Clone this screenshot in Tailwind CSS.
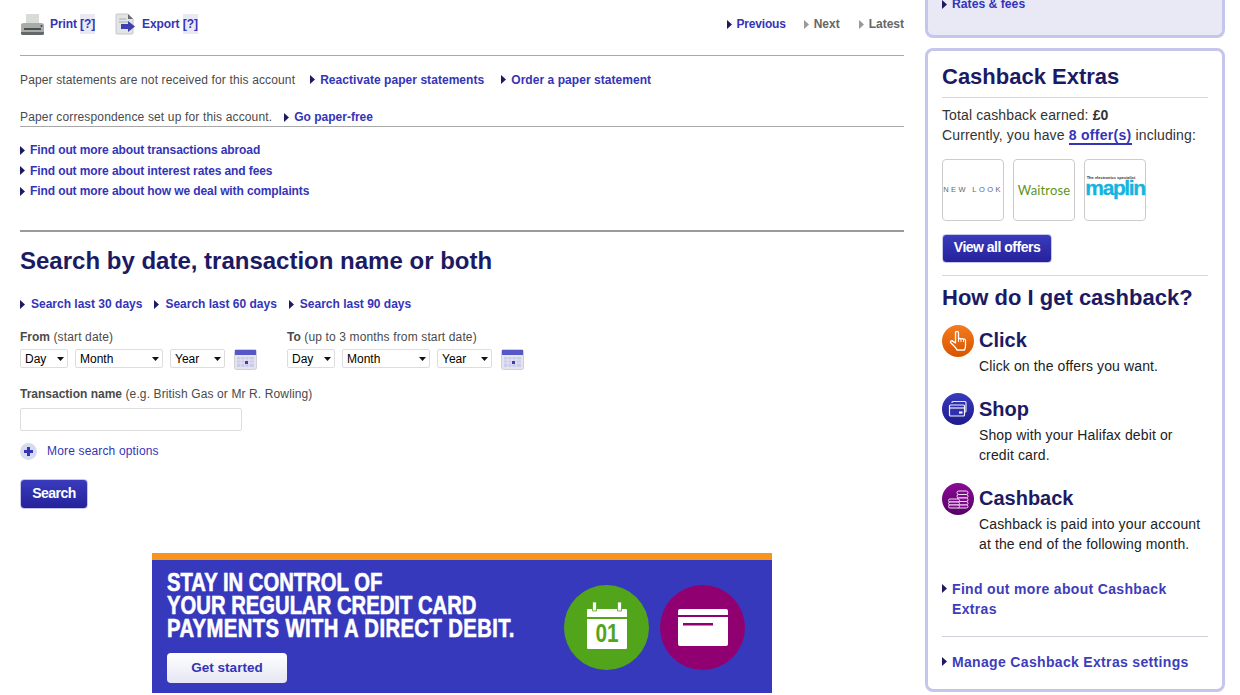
<!DOCTYPE html>
<html lang="en">

<head>
  <meta charset="UTF-8">
  <meta name="viewport" content="width=device-width, initial-scale=1.0">
  <title>Statement search</title>
  <script src="https://cdn.jsdelivr.net/npm/@tailwindcss/browser@4"></script>
</head>

<body class="h-[695px] overflow-hidden bg-white font-['Liberation_Sans',Arial,sans-serif] text-xs text-[#4a4a4a]">
  <div class="flex pl-[20px]">

    <!-- main column -->
    <main class="w-[884px] shrink-0">
      <div class="mb-[7px] flex h-[48px] items-center justify-between font-bold text-[#3434b8]">
        <div class="flex items-center tracking-[-0.1px]">
          <svg class="mr-[5px] h-[23px] w-[25px]" viewBox="0 0 25 23">
            <path d="M6 1h13v10H6z" fill="#d9dbd9" />
            <path d="M1 12q0-2 3-2h17q3 0 3 2v8H1z" fill="#a9adaa" />
            <path d="M1 19h23v2q0 1-2 1H3q-2 0-2-1z" fill="#63686a" />
            <path d="M4 15h17v2H4z" fill="#4b4f50" />
            <circle cx="21.500" cy="13" r="1" fill="#3434b8" />
          </svg>
          <span>Print <span class="bg-[#e9e9f6] py-[3px]">[?]</span></span>
          <svg class="ml-[20px] mr-[6px] h-[22px] w-[21px]" viewBox="0 0 21 22">
            <path d="M1 2q0-1 1-1h11l5 5v14q0 1-1 1H2q-1 0-1-1z" fill="#e3e4e6" stroke="#c4c6ca" />
            <path d="M13 1v5h5z" fill="#6b6d75" />
            <path d="M4 6h7M4 9h10" stroke="#a8aab0" />
            <path d="M6 11h7V8l7 5.500-7 5.500v-3H6z" fill="#3d3fb0" />
          </svg>
          <span>Export <span class="bg-[#e9e9f6] py-[3px]">[?]</span></span>
        </div>
        <div class="flex items-center">
          <svg class="mr-[5px] h-[9px] w-[5px]" viewBox="0 0 5 9"><path d="M0 0l5 4.500L0 9z" fill="#1b1a63" /></svg>
          <span class="tracking-[-0.2px]">Previous</span>
          <svg class="ml-[18px] mr-[5px] h-[9px] w-[5px]" viewBox="0 0 5 9"><path d="M0 0l5 4.500L0 9z" fill="#999999" /></svg>
          <span class="text-[#666666]">Next</span>
          <svg class="ml-[19px] mr-[5px] h-[9px] w-[5px]" viewBox="0 0 5 9"><path d="M0 0l5 4.500L0 9z" fill="#999999" /></svg>
          <span class="text-[#666666]">Latest</span>
        </div>
      </div>

      <div class="flex h-[48px] items-center border-t border-[#a8a8a8]">
        <span class="tracking-[0.14px]">Paper statements are not received for this account</span>
        <svg class="ml-[15px] mr-[5px] h-[9px] w-[5px]" viewBox="0 0 5 9"><path d="M0 0l5 4.500L0 9z" fill="#1b1a63" /></svg>
        <a class="font-bold tracking-[0.05px] text-[#3434b8]">Reactivate paper statements</a>
        <svg class="ml-[17px] mr-[5px] h-[9px] w-[5px]" viewBox="0 0 5 9"><path d="M0 0l5 4.500L0 9z" fill="#1b1a63" /></svg>
        <a class="font-bold tracking-[0.05px] text-[#3434b8]">Order a paper statement</a>
      </div>

      <div class="mt-[5px] flex h-[19px] items-center border-b border-[#a8a8a8]">
        <span class="tracking-[0.15px]">Paper correspondence set up for this account.</span>
        <svg class="ml-[12px] mr-[5px] h-[9px] w-[5px]" viewBox="0 0 5 9"><path d="M0 0l5 4.500L0 9z" fill="#1b1a63" /></svg>
        <a class="font-bold text-[#3434b8]">Go paper-free</a>
      </div>

      <ul class="mt-[13px] font-bold tracking-[-0.1px] text-[#3434b8]">
        <li class="flex h-[20px] items-center"><svg class="mr-[5px] h-[9px] w-[5px]" viewBox="0 0 5 9"><path d="M0 0l5 4.500L0 9z" fill="#1b1a63" /></svg>Find out more about transactions abroad</li>
        <li class="flex h-[21px] items-center"><svg class="mr-[5px] h-[9px] w-[5px]" viewBox="0 0 5 9"><path d="M0 0l5 4.500L0 9z" fill="#1b1a63" /></svg>Find out more about interest rates and fees</li>
        <li class="flex h-[20px] items-center"><svg class="mr-[5px] h-[9px] w-[5px]" viewBox="0 0 5 9"><path d="M0 0l5 4.500L0 9z" fill="#1b1a63" /></svg>Find out more about how we deal with complaints</li>
      </ul>

      <div class="mt-[29px] border-t-2 border-[#9a9a9a] pt-[14px]">
        <h2 class="text-2xl leading-[30px] font-bold text-[#1b1a63]">Search by date, transaction name or both</h2>
      </div>

      <div class="mt-[18px] flex h-[20px] items-center font-bold text-[#3434b8]">
        <svg class="mr-[6px] h-[9px] w-[5px]" viewBox="0 0 5 9"><path d="M0 0l5 4.500L0 9z" fill="#1b1a63" /></svg>
        <span>Search last 30 days</span>
        <svg class="ml-[12px] mr-[6px] h-[9px] w-[5px]" viewBox="0 0 5 9"><path d="M0 0l5 4.500L0 9z" fill="#1b1a63" /></svg>
        <span>Search last 60 days</span>
        <svg class="ml-[12px] mr-[6px] h-[9px] w-[5px]" viewBox="0 0 5 9"><path d="M0 0l5 4.500L0 9z" fill="#1b1a63" /></svg>
        <span>Search last 90 days</span>
      </div>

      <div class="mt-[15px] flex">
        <div class="w-[267px]">
          <div class="h-[17px] leading-[17px] tracking-[0.14px]"><b class="tracking-normal">From</b> (start date)</div>
          <div class="mt-[3px] flex items-start">
            <div class="relative w-[48px]">
              <select class="h-[19px] w-full appearance-none rounded-[2px] border border-[#dddddd] bg-white pl-[4px] text-xs text-black"><option>Day</option></select>
              <svg class="absolute right-[4px] top-[8px] h-[4px] w-[7px]" viewBox="0 0 7 4"><path d="M0 0h7L3.500 4z" fill="#111111" /></svg>
            </div>
            <div class="relative ml-[7px] w-[88px]">
              <select class="h-[19px] w-full appearance-none rounded-[2px] border border-[#dddddd] bg-white pl-[4px] text-xs text-black"><option>Month</option></select>
              <svg class="absolute right-[4px] top-[8px] h-[4px] w-[7px]" viewBox="0 0 7 4"><path d="M0 0h7L3.500 4z" fill="#111111" /></svg>
            </div>
            <div class="relative ml-[7px] w-[55px]">
              <select class="h-[19px] w-full appearance-none rounded-[2px] border border-[#dddddd] bg-white pl-[4px] text-xs text-black"><option>Year</option></select>
              <svg class="absolute right-[4px] top-[8px] h-[4px] w-[7px]" viewBox="0 0 7 4"><path d="M0 0h7L3.500 4z" fill="#111111" /></svg>
            </div>
            <svg class="ml-[9px] h-[21px] w-[23px]" viewBox="0 0 23 21">
              <rect x="0.500" y="0.500" width="22" height="20" rx="2" fill="#e4e4ee" stroke="#cfcfd6" />
              <path d="M1 1h21v5H1z" fill="#5557c6" />
              <path d="M3 8h17v10H3z" fill="#c9cbe8" />
              <path d="M3 11h17M3 14h17M7 8v10M11 8v10M15 8v10" stroke="#e4e4f2" />
              <path d="M11 12h3v3h-3z" fill="#3d3fb0" />
            </svg>
          </div>
        </div>
        <div>
          <div class="h-[17px] leading-[17px] tracking-[0.14px]"><b class="tracking-normal">To</b> (up to 3 months from start date)</div>
          <div class="mt-[3px] flex items-start">
            <div class="relative w-[48px]">
              <select class="h-[19px] w-full appearance-none rounded-[2px] border border-[#dddddd] bg-white pl-[4px] text-xs text-black"><option>Day</option></select>
              <svg class="absolute right-[4px] top-[8px] h-[4px] w-[7px]" viewBox="0 0 7 4"><path d="M0 0h7L3.500 4z" fill="#111111" /></svg>
            </div>
            <div class="relative ml-[7px] w-[88px]">
              <select class="h-[19px] w-full appearance-none rounded-[2px] border border-[#dddddd] bg-white pl-[4px] text-xs text-black"><option>Month</option></select>
              <svg class="absolute right-[4px] top-[8px] h-[4px] w-[7px]" viewBox="0 0 7 4"><path d="M0 0h7L3.500 4z" fill="#111111" /></svg>
            </div>
            <div class="relative ml-[7px] w-[55px]">
              <select class="h-[19px] w-full appearance-none rounded-[2px] border border-[#dddddd] bg-white pl-[4px] text-xs text-black"><option>Year</option></select>
              <svg class="absolute right-[4px] top-[8px] h-[4px] w-[7px]" viewBox="0 0 7 4"><path d="M0 0h7L3.500 4z" fill="#111111" /></svg>
            </div>
            <svg class="ml-[9px] h-[21px] w-[23px]" viewBox="0 0 23 21">
              <rect x="0.500" y="0.500" width="22" height="20" rx="2" fill="#e4e4ee" stroke="#cfcfd6" />
              <path d="M1 1h21v5H1z" fill="#5557c6" />
              <path d="M3 8h17v10H3z" fill="#c9cbe8" />
              <path d="M3 11h17M3 14h17M7 8v10M11 8v10M15 8v10" stroke="#e4e4f2" />
              <path d="M11 12h3v3h-3z" fill="#3d3fb0" />
            </svg>
          </div>
        </div>
      </div>

      <div class="mt-[16px] h-[17px] leading-[17px] tracking-[0.12px]"><b class="tracking-normal">Transaction name</b> (e.g. British Gas or Mr R. Rowling)</div>
      <input type="text" class="mt-[5px] block h-[23px] w-[222px] rounded-[2px] border border-[#dddddd] bg-white">

      <div class="mt-[11px] flex h-[18px] items-center text-[#3434b8]">
        <svg class="mr-[10px] h-[17px] w-[17px]" viewBox="0 0 17 17">
          <circle cx="8.500" cy="8.500" r="8.500" fill="#d6dcee" />
          <path d="M7 4h3v3h3v3h-3v3H7v-3H4V7h3z" fill="#3434b8" />
        </svg>
        <span class="tracking-[0.16px]">More search options</span>
      </div>

      <button class="mt-[19px] block h-[30px] w-[68px] rounded-[4px] border border-[#c5c6ec] bg-gradient-to-b from-[#3a3bbd] to-[#25219a] pb-[2px] text-sm font-bold tracking-[-0.5px] text-white">Search</button>

      <!-- direct debit banner -->
      <section class="ml-[132px] mt-[44px] flex h-[140px] w-[620px] items-start justify-between overflow-hidden border-t-[7px] border-[#f7941d] bg-[#3739bd] pl-[15px] pr-[27px]">
        <div class="w-[390px]">
          <p class="mt-[11px] origin-left scale-x-[0.81] text-[25px] leading-[23px] font-bold whitespace-nowrap text-white [-webkit-text-stroke:0.6px_white]">STAY IN CONTROL OF<br>YOUR REGULAR CREDIT CARD<br><span class="tracking-[0.5px]">PAYMENTS WITH A DIRECT DEBIT.</span></p>
          <button class="mt-[13px] block h-[30px] w-[120px] rounded-[4px] bg-gradient-to-b from-white to-[#e6e6f4] text-[13.500px] font-bold text-[#3434b8]">Get started</button>
        </div>
        <div class="mt-[25px] flex gap-[11px]">
          <div class="flex size-[85px] items-center justify-center rounded-full bg-[#52a41a] pb-[5px]">
            <svg class="h-[47px] w-[40px]" viewBox="0 0 40 47">
              <path d="M1 7h38q1 0 1 1v7H0V8q0-1 1-1zM0 17h40v29q0 1-1 1H1q-1 0-1-1z" fill="#ffffff" />
              <path d="M5.500 0h4v9h-4zM30.500 0h4v9h-4z" fill="#ffffff" stroke="#52a41a" stroke-width="0.800" />
              <text x="20" y="40.500" text-anchor="middle" transform="translate(4 0) scale(0.8 1)" font-family="Liberation Sans, sans-serif" font-weight="700" font-size="26" fill="#52a41a">01</text>
            </svg>
          </div>
          <div class="flex size-[85px] items-center justify-center rounded-full bg-[#910070]">
            <svg class="h-[37px] w-[50px]" viewBox="0 0 50 37">
              <path d="M2 0h46q2 0 2 2v4H0V2q0-2 2-2zM0 8h50v27q0 2-2 2H2q-2 0-2-2z" fill="#ffffff" />
              <path d="M5 14h30v2.500H5z" fill="#910070" />
            </svg>
          </div>
        </div>
      </section>
    </main>

    <!-- sidebar -->
    <aside class="ml-[21px] w-[300px] shrink-0">
      <div class="h-[38px] overflow-hidden rounded-b-lg border-[3px] border-t-0 border-[#c5c6ec] bg-[#e9e9f6] pl-[14px]">
        <div class="-mt-[6px] flex h-[20px] items-center text-[12.200px] font-bold text-[#3434b8]">
          <svg class="mr-[5px] h-[9px] w-[5px]" viewBox="0 0 5 9"><path d="M0 0l5 4.500L0 9z" fill="#1b1a63" /></svg>
          Rates &amp; fees
        </div>
      </div>

      <div class="mt-[10px] h-[644px] rounded-lg border-[3px] border-[#c5c6ec] bg-white px-[14px] text-sm tracking-[0.12px] text-[#333333]">
        <h3 class="border-b border-[#d8d8d8] pb-[7px] pt-[13px] text-[22px] leading-[26px] font-bold tracking-normal text-[#1b1a63]">Cashback Extras</h3>
        <p class="mt-[7px] leading-[20px]">Total cashback earned: <b>£0</b><br>Currently, you have <a class="border-b-2 border-[#3434b8] font-bold tracking-[0.3px] text-[#3434b8]">8 offer(s)</a> including:</p>

        <div class="mt-[14px] flex gap-[9px]">
          <div class="flex size-[62px] items-center justify-center rounded-[4px] border border-[#cccccc] text-[7.500px] tracking-[2.400px] whitespace-nowrap text-[#666666]">NEW LOOK</div>
          <div class="flex size-[62px] items-center justify-center rounded-[4px] border border-[#cccccc] font-['Lato',sans-serif] text-[13px] text-[#5f9420]">Waitrose</div>
          <div class="flex size-[62px] flex-col items-center justify-center rounded-[4px] border border-[#cccccc] pb-[9px]">
            <span class="mr-[8px] text-[4px] leading-[5px] font-bold tracking-normal text-[#333333]">The electronics specialist</span>
            <span class="text-[21px] leading-[16px] font-bold tracking-[-1.400px] text-[#13b5e0] [-webkit-text-stroke:0.3px_#13b5e0]">maplin</span>
          </div>
        </div>

        <button class="mt-[13px] block h-[29px] w-[110px] rounded-[4px] border border-[#c5c6ec] bg-gradient-to-b from-[#3a3bbd] to-[#25219a] pb-[3px] text-sm font-bold tracking-[-0.5px] text-white">View all offers</button>

        <div class="mt-[12px] border-t border-[#d8d8d8] pt-[9px]">
          <h3 class="text-[22px] leading-[26px] font-bold tracking-normal text-[#1b1a63]">How do I get cashback?</h3>
        </div>

        <div class="mt-[14px] flex gap-[5px]">
          <svg class="size-[32px] shrink-0" viewBox="0 0 32 32">
            <defs><linearGradient id="orange" x1="0" y1="0" x2="0" y2="1"><stop offset="0" stop-color="#f47a1f" /><stop offset="1" stop-color="#d85500" /></linearGradient></defs>
            <circle cx="16" cy="16" r="16" fill="url(#orange)" />
            <path d="M13.500 18V8q0-1.700 1.500-1.700T16.500 8v6q1.500-1 2.500 0 1.700-1 2.500.3 1.700-.6 2 1V21q0 2-1 4H15q-1-2-2.500-3.500L9 18q-1.300-1.600.2-2.200 1-.3 2.200.8z" fill="none" stroke="#ffffff" stroke-width="1.300" stroke-linejoin="round" />
            <path d="M16.500 14v3M19 14.200V17M21.500 14.500V17" fill="none" stroke="#ffffff" stroke-width="0.900" />
          </svg>
          <div class="pt-[3px]">
            <h4 class="text-xl leading-[24px] font-bold tracking-normal text-[#1b1a63]">Click</h4>
            <p class="mt-[4px] leading-[20px] text-[#222222]">Click on the offers you want.</p>
          </div>
        </div>

        <div class="mt-[17px] flex gap-[5px]">
          <svg class="size-[32px] shrink-0" viewBox="0 0 32 32">
            <defs><linearGradient id="blue" x1="0" y1="0" x2="0" y2="1"><stop offset="0" stop-color="#3a3bbd" /><stop offset="1" stop-color="#1d1a8c" /></linearGradient></defs>
            <circle cx="16" cy="16" r="16" fill="url(#blue)" />
            <path d="M10 10V9.500q0-1 1-1h12q1 0 1 1V18q0 1-1 1h-1" fill="none" stroke="#e4e4f6" stroke-width="1.200" />
            <rect x="7.500" y="12" width="15" height="11" rx="1" fill="#3030aa" stroke="#f2f2fb" stroke-width="1.200" />
            <path d="M8 15h14" stroke="#f2f2fb" stroke-width="1.200" />
            <path d="M17 18.500h3.500v2H17z" fill="#ffffff" />
          </svg>
          <div class="pt-[4px]">
            <h4 class="text-xl leading-[24px] font-bold tracking-normal text-[#1b1a63]">Shop</h4>
            <p class="mt-[4px] leading-[20px] text-[#222222]">Shop with your Halifax debit or<br>credit card.</p>
          </div>
        </div>

        <div class="mt-[18px] flex gap-[5px]">
          <svg class="size-[32px] shrink-0" viewBox="0 0 32 32">
            <defs><linearGradient id="purple" x1="0" y1="0" x2="0" y2="1"><stop offset="0" stop-color="#8a0a96" /><stop offset="1" stop-color="#560066" /></linearGradient></defs>
            <circle cx="16" cy="16" r="16" fill="url(#purple)" />
            <g fill="#7a0a88" stroke="#f0dff2" stroke-width="1">
              <rect x="15" y="8" width="11" height="3.500" rx="1.700" />
              <rect x="15" y="11.500" width="11" height="3.500" rx="1.700" />
              <rect x="15" y="15" width="11" height="3.500" rx="1.700" />
              <rect x="15" y="18.500" width="11" height="3.500" rx="1.700" />
              <rect x="15" y="22" width="11" height="3" rx="1.500" />
              <rect x="6.500" y="16" width="11" height="3" rx="1.500" />
              <rect x="6.500" y="19" width="11" height="3" rx="1.500" />
              <rect x="6.500" y="22" width="11" height="3" rx="1.500" />
            </g>
          </svg>
          <div class="pt-[3px]">
            <h4 class="text-xl leading-[24px] font-bold tracking-normal text-[#1b1a63]">Cashback</h4>
            <p class="mt-[4px] leading-[20px] text-[#222222]">Cashback is paid into your account<br>at the end of the following month.</p>
          </div>
        </div>

        <div class="mt-[25px] flex font-bold text-[#3d3dbb]">
          <svg class="mr-[5px] mt-[5px] h-[9px] w-[5px] shrink-0" viewBox="0 0 5 9"><path d="M0 0l5 4.500L0 9z" fill="#1b1a63" /></svg>
          <a class="leading-[20px] tracking-[0.33px]">Find out more about Cashback<br>Extras</a>
        </div>

        <div class="mt-[17px] flex border-t border-[#d0d0d8] pt-[15px] font-bold text-[#3d3dbb]">
          <svg class="mr-[5px] mt-[5px] h-[9px] w-[5px] shrink-0" viewBox="0 0 5 9"><path d="M0 0l5 4.500L0 9z" fill="#1b1a63" /></svg>
          <a class="leading-[20px] tracking-[0.33px]">Manage Cashback Extras settings</a>
        </div>
      </div>
    </aside>
  </div>
</body>

</html>
